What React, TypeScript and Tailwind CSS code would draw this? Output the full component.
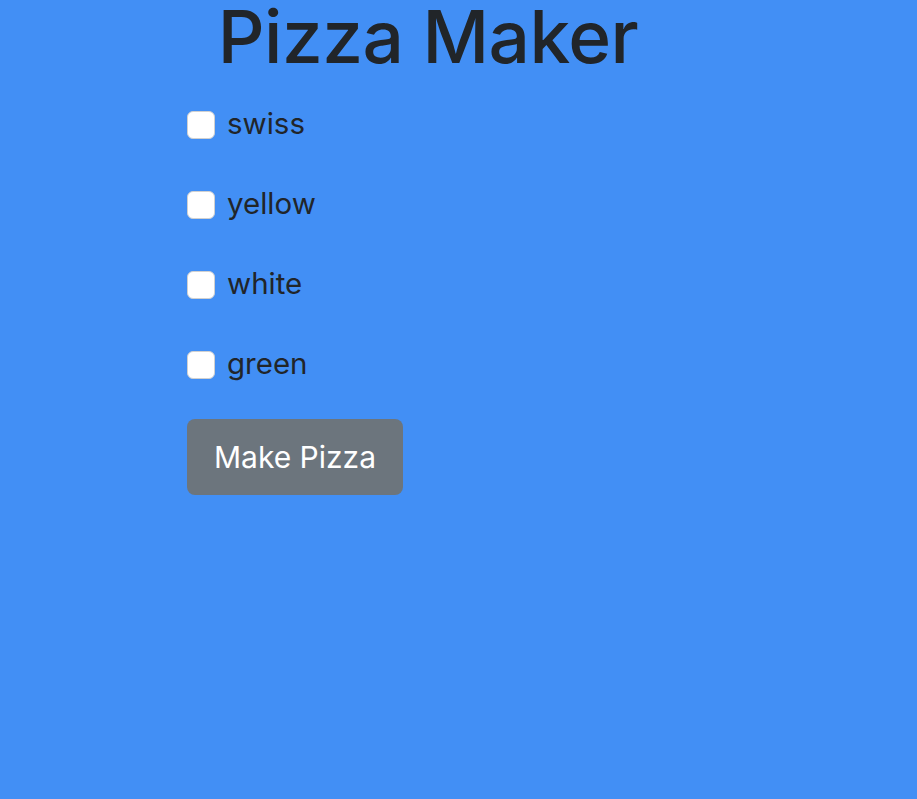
const toppings = ["swiss", "yellow", "white", "green"];

export default function App() {
  return (
    <div
      className="min-h-screen bg-[#428ff5] text-[#212529]"
      style={{ fontFamily: "Inter, 'Noto Sans', sans-serif" }}
    >
      <div className="ml-[187px] w-[482px]">
        <h1 className="text-center text-[73px] font-medium leading-[73px] tracking-[-0.5px]">
          Pizza Maker
        </h1>
        <div className="mt-[38px] flex flex-col gap-[52px]">
          {toppings.map((t) => (
            <label key={t} className="flex h-[28px] items-center gap-[12px]">
              <span className="block h-[28px] w-[28px] rounded-[6px] border border-[#d0d0d0] bg-white" />
              <span className="-mt-[3px] text-[29.5px] leading-none">{t}</span>
            </label>
          ))}
        </div>
        <button className="mt-[40px] h-[76px] w-[216px] rounded-[8px] bg-[#6c757d] text-[30px] text-white">
          Make Pizza
        </button>
      </div>
    </div>
  );
}
